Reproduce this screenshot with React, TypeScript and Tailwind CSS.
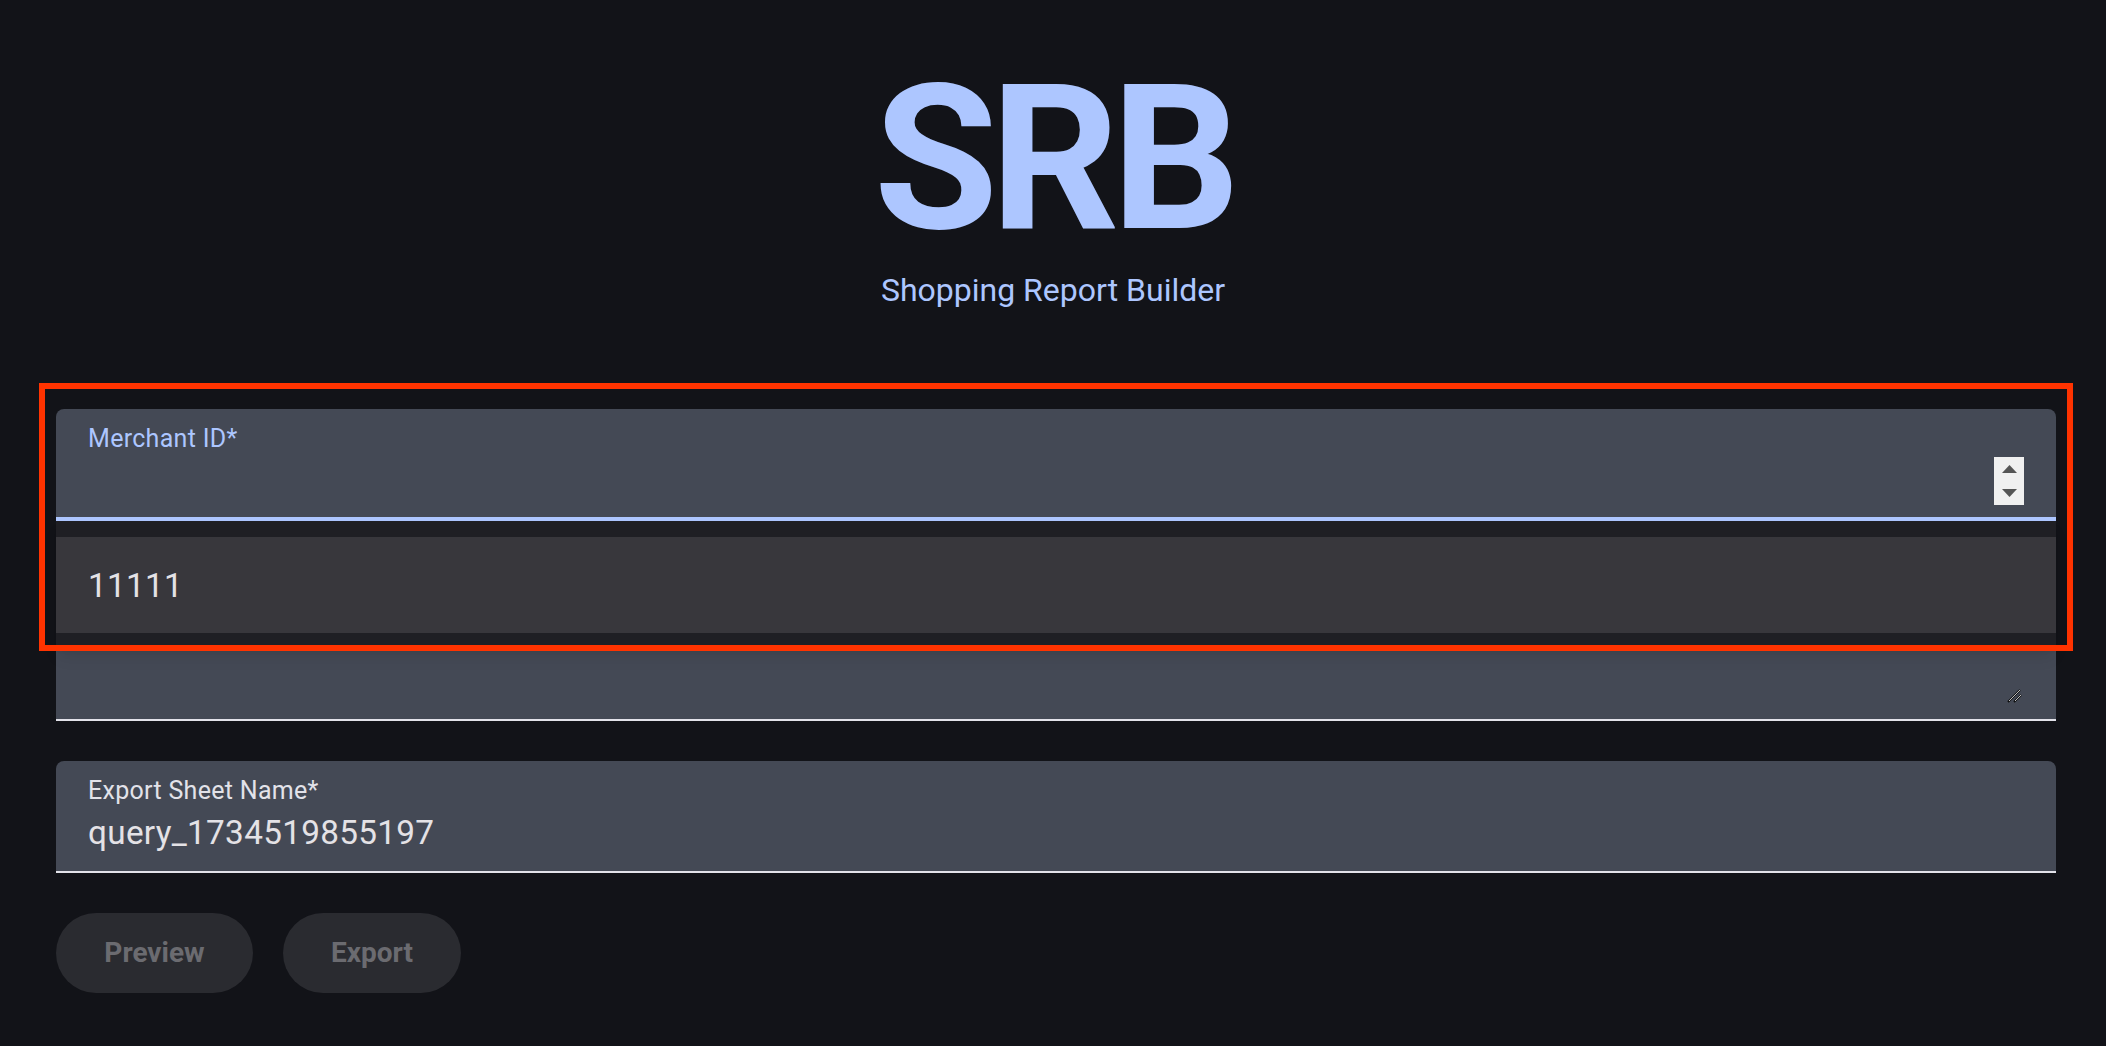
import React from "react";

export default function App() {
  return (
    <div
      className="min-h-screen w-full bg-[#121318] pb-[53px]"
      style={{ fontFamily: "Roboto, 'Liberation Sans', sans-serif" }}
    >
      <div className="flex flex-col items-center pt-[58px]">
        <h1 className="text-[202px] leading-[202px] font-bold text-[#adc6ff] tracking-[-8px]">SRB</h1>
        <p className="mt-[14px] text-[32px] leading-[32px] text-[#adc6ff]">Shopping Report Builder</p>
      </div>

      <div className="ml-[56px] w-[2000px] mt-[103px] flex flex-col">
        {/* Merchant ID field with open dropdown */}
        <div className="relative z-10">
          <div className="relative h-[112px] rounded-t-[8px] bg-[#444955] border-b-4 border-[#adc6ff]">
            <div className="pl-[32px] pt-[17px] text-[25px] leading-[25px] tracking-[0.3px] text-[#adc6ff]">Merchant ID*</div>
            <div className="absolute right-[32px] top-[48px] w-[30px] h-[48px] bg-[#f0f0f0] flex flex-col items-center justify-center gap-[16px]">
              <svg width="15" height="8" viewBox="0 0 15 8"><polygon points="7.5,0 15,8 0,8" fill="#555" /></svg>
              <svg width="15" height="8" viewBox="0 0 15 8"><polygon points="0,0 15,0 7.5,8" fill="#555" /></svg>
            </div>
          </div>
          <div className="absolute left-0 right-0 top-[112px] bg-[#1f1f24] py-[16px] shadow-lg">
            <div className="h-[96px] bg-[#38373c] flex items-center pl-[32px] text-[33.3px] leading-[33px] text-[#e4e2e6] tracking-[0.3px]">11111</div>
          </div>
          <div className="absolute left-[-17px] top-[-26px] w-[2034px] h-[268px] border-[6px] border-[#ff3300] pointer-events-none" />
        </div>

        {/* Multiline field (mostly covered) */}
        <div className="relative mt-[40px] h-[160px] rounded-t-[8px] bg-[#444955] border-b-2 border-[#e2e2e9]">
          <svg className="absolute right-[34px] bottom-[16px]" width="15" height="14" viewBox="0 0 15 14">
            <line x1="1" y1="13" x2="13" y2="1" stroke="#111" strokeWidth="2" />
            <line x1="2" y1="12" x2="13" y2="1" stroke="#bbb" strokeWidth="1" />
            <line x1="7" y1="13" x2="14" y2="6" stroke="#111" strokeWidth="2" />
            <line x1="8" y1="12" x2="14" y2="6" stroke="#bbb" strokeWidth="1" />
          </svg>
        </div>

        {/* Export Sheet Name */}
        <div className="mt-[40px] h-[112px] rounded-t-[8px] bg-[#444955] border-b-2 border-[#e2e2e9] pl-[32px] pt-[17px]">
          <div className="text-[25px] leading-[25px] tracking-[0.3px] text-[#e2e2e9]">Export Sheet Name*</div>
          <div className="mt-[13px] text-[33.3px] leading-[33px] tracking-[0.3px] text-[#e4e2e6]">query_1734519855197</div>
        </div>

        {/* Buttons */}
        <div className="mt-[40px] flex gap-[30px]">
          <button className="w-[197px] h-[80px] rounded-full bg-[#2a2b30] text-[28px] font-bold text-[#6b6b70]">Preview</button>
          <button className="w-[178px] h-[80px] rounded-full bg-[#2a2b30] text-[28px] font-bold text-[#6b6b70]">Export</button>
        </div>
      </div>
    </div>
  );
}
